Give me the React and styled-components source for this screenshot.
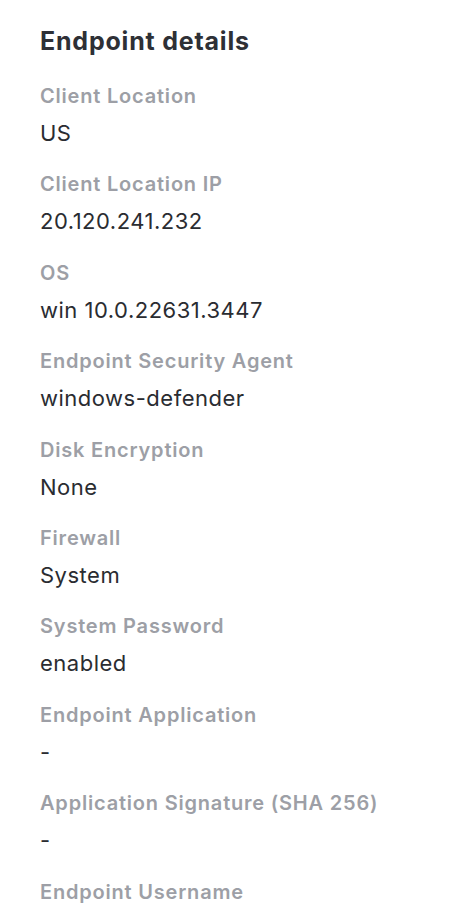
import React from 'react'
import styled, { createGlobalStyle } from 'styled-components'

const GlobalStyle = createGlobalStyle`
    html, body {
        margin: 0;
        padding: 0;
        background: #ffffff;
    }
    body {
        font-family: Inter, "Noto Sans", sans-serif;
        -webkit-font-smoothing: antialiased;
    }
`

const Panel = styled.section`
    padding: 26px 40px 0 40px;
    display: flex;
    flex-direction: column;
`

const Heading = styled.h2`
    margin: 0 0 28px 0;
    font-size: 25px;
    font-weight: 700;
    color: #2e3036;
    line-height: 30px;
    letter-spacing: 0.8px;
`

const FieldList = styled.dl`
    margin: 0;
    display: flex;
    flex-direction: column;
    gap: 26.4px;
`

const Field = styled.div`
    display: flex;
    flex-direction: column;
    gap: 12px;
`

const Label = styled.dt`
    font-size: 20px;
    font-weight: 600;
    color: #9d9fa6;
    line-height: 24px;
    letter-spacing: 0.8px;
`

const Value = styled.dd`
    margin: 0;
    font-size: 22px;
    font-weight: 400;
    color: #2a2c31;
    line-height: 26px;
    letter-spacing: 0.5px;
`

const fields = [
    { label: 'Client Location', value: 'US' },
    { label: 'Client Location IP', value: '20.120.241.232' },
    { label: 'OS', value: 'win 10.0.22631.3447' },
    { label: 'Endpoint Security Agent', value: 'windows-defender' },
    { label: 'Disk Encryption', value: 'None' },
    { label: 'Firewall', value: 'System' },
    { label: 'System Password', value: 'enabled' },
    { label: 'Endpoint Application', value: '-' },
    { label: 'Application Signature (SHA 256)', value: '-' },
    { label: 'Endpoint Username', value: '' },
]

const App = () => (
    <>
        <GlobalStyle />
        <Panel>
            <Heading>Endpoint details</Heading>
            <FieldList>
                {fields.map(f => (
                    <Field key={f.label}>
                        <Label>{f.label}</Label>
                        {f.value && <Value>{f.value}</Value>}
                    </Field>
                ))}
            </FieldList>
        </Panel>
    </>
)

export default App
